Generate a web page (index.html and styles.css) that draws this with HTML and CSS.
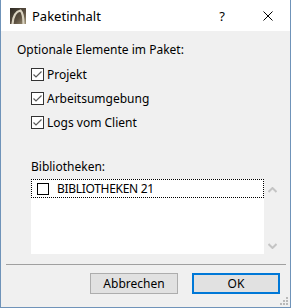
FILE: index.html
```html
<!DOCTYPE html>
<html lang="de">
<head>
    <meta charset="UTF-8">
    <title>Paketinhalt</title>
    <link rel="stylesheet" href="styles.css">
</head>
<body>
    <div class="window">
        <div class="titlebar">
            <svg class="app-icon" width="16" height="16" viewBox="0 0 16 16">
                <defs>
                    <linearGradient id="ig" x1="0" y1="0" x2="1" y2="1">
                        <stop offset="0" stop-color="#2e2a24"/>
                        <stop offset="0.6" stop-color="#5c5040"/>
                        <stop offset="1" stop-color="#a09478"/>
                    </linearGradient>
                </defs>
                <rect width="16" height="16" fill="url(#ig)"/>
                <path d="M2.5 16 C3 8 6 3.5 10.5 2.5 C13 5 13.5 10 13.5 16" fill="none" stroke="#d9d2c0" stroke-width="2.2"/>
            </svg>
            <span class="title">Paketinhalt</span>
            <span class="help">?</span>
            <svg class="close" width="10" height="10" viewBox="0 0 10 10">
                <path d="M0.5 0.5 L9.5 9.5 M9.5 0.5 L0.5 9.5" stroke="#000" stroke-width="1"/>
            </svg>
        </div>

        <div class="client">
            <div class="group-label">Optionale Elemente im Paket:</div>
            <ul class="options">
                <li><span class="check"><svg width="11" height="11" viewBox="0 0 11 11"><path d="M1.5 5.5 L4 8 L9.5 2.5" fill="none" stroke="#5a5a5a" stroke-width="1.2"/></svg></span>Projekt</li>
                <li><span class="check"><svg width="11" height="11" viewBox="0 0 11 11"><path d="M1.5 5.5 L4 8 L9.5 2.5" fill="none" stroke="#5a5a5a" stroke-width="1.2"/></svg></span>Arbeitsumgebung</li>
                <li><span class="check"><svg width="11" height="11" viewBox="0 0 11 11"><path d="M1.5 5.5 L4 8 L9.5 2.5" fill="none" stroke="#5a5a5a" stroke-width="1.2"/></svg></span>Logs vom Client</li>
            </ul>

            <div class="lib-label">Bibliotheken:</div>
            <div class="lib-row">
                <div class="list">
                    <div class="item"><span class="box"></span>BIBLIOTHEKEN 21</div>
                </div>
                <div class="scroll">
                    <svg width="9" height="6" viewBox="0 0 9 6"><path d="M0.5 5 L4.5 1 L8.5 5" fill="none" stroke="#c4c4c4" stroke-width="2"/></svg>
                    <svg width="9" height="6" viewBox="0 0 9 6"><path d="M0.5 1 L4.5 5 L8.5 1" fill="none" stroke="#c4c4c4" stroke-width="2"/></svg>
                </div>
            </div>

            <div class="sep"></div>

            <div class="buttons">
                <button>Abbrechen</button>
                <button class="default">OK</button>
            </div>

            <svg class="grip" width="8" height="8" viewBox="0 0 8 8" fill="#b9b9b9">
                <rect x="6" y="0" width="2" height="2"/>
                <rect x="3" y="3" width="2" height="2"/>
                <rect x="6" y="3" width="2" height="2"/>
                <rect x="0" y="6" width="2" height="2"/>
                <rect x="3" y="6" width="2" height="2"/>
                <rect x="6" y="6" width="2" height="2"/>
            </svg>
        </div>
    </div>
</body>
</html>
```

FILE: styles.css
```css
* {
    box-sizing: border-box;
}
body {
    margin: 0;
    font-family: "Noto Sans", "DejaVu Sans", sans-serif;
    font-size: 12px;
    color: #000;
}
.window {
    width: 291px;
    height: 308px;
    display: flex;
    flex-direction: column;
    border: 1px solid #6f93b9;
    border-top: 0;
}
.titlebar {
    height: 31px;
    background: #fff;
    display: flex;
    align-items: center;
    padding-left: 9px;
}
.app-icon {
    margin-top: 1px;
}
.title {
    margin-left: 6px;
    font-size: 13px;
    flex: 1;
}
.help {
    font-size: 13px;
    margin-right: 38px;
}
.close {
    margin-right: 17px;
}
.client {
    flex: 1;
    background: #f0f0f0;
    position: relative;
    padding-top: 11px;
}
.group-label {
    margin-left: 16px;
    line-height: 16px;
}
.options {
    list-style: none;
    margin: 4px 0 0 30px;
    padding: 0;
}
.options li {
    height: 24px;
    display: flex;
    align-items: center;
}
.check {
    width: 13px;
    height: 13px;
    border: 1px solid #333;
    background: #fff;
    display: flex;
    align-items: center;
    justify-content: center;
    margin-right: 3px;
}
.lib-label {
    margin: 25px 0 0 30px;
    line-height: 16px;
}
.lib-row {
    display: flex;
    margin: 4px 0 0 30px;
    height: 75px;
}
.list {
    width: 233px;
    background: #fff;
}
.item {
    height: 19px;
    border: 1px dotted #000;
    display: flex;
    align-items: center;
    padding-left: 5px;
    letter-spacing: -0.3px;
}
.box {
    width: 12px;
    height: 12px;
    border: 1px solid #000;
    background: #fff;
    margin-right: 8px;
}
.scroll {
    width: 14px;
    display: flex;
    flex-direction: column;
    justify-content: space-between;
    align-items: center;
    padding: 8px 0 5px 2px;
}
.sep {
    height: 1px;
    background: #a0a0a0;
    margin: 10px 4px 0 5px;
}
.buttons {
    display: flex;
    justify-content: flex-end;
    gap: 14px;
    margin: 8px 10px 0 0;
}
button {
    width: 88px;
    height: 21px;
    font-family: inherit;
    font-size: 12px;
    background: #e1e1e1;
    border: 1px solid #adadad;
    padding: 0;
    color: #000;
}
button.default {
    border: 2px solid #0078d7;
}
.grip {
    position: absolute;
    right: 2px;
    bottom: 2px;
}
```
